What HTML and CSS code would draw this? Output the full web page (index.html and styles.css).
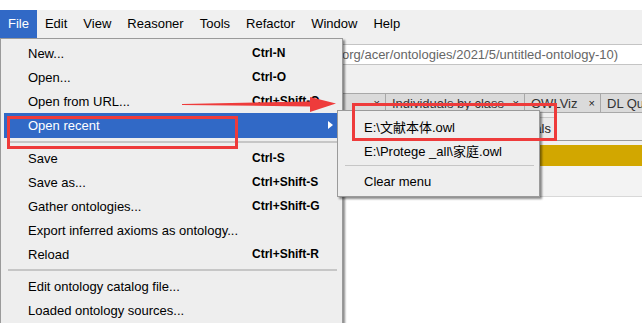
FILE: index.html
```html
<!DOCTYPE html>
<html lang="en">
<head>
  <meta charset="UTF-8">
  <title>Protege - File menu</title>
  <link rel="stylesheet" href="styles.css">
</head>
<body>
  <div class="title-strip">
    <span>untitled-ontology-10 (http://www.semanticweb.org/acer/ontologies/2021/5/untitled-ontology-10) : [C:\Users\acer\ontology.owl]</span>
  </div>

  <nav class="menubar">
    <div class="menubar-item active">File</div>
    <div class="menubar-item">Edit</div>
    <div class="menubar-item">View</div>
    <div class="menubar-item">Reasoner</div>
    <div class="menubar-item">Tools</div>
    <div class="menubar-item">Refactor</div>
    <div class="menubar-item">Window</div>
    <div class="menubar-item">Help</div>
  </nav>

  <div class="workspace">
    <div class="toolbar">
      <div class="address">org/acer/ontologies/2021/5/untitled-ontology-10)</div>
    </div>
    <div class="tabs">
      <div class="tab tab-first"><span>Data properties</span><span class="close">×</span></div>
      <div class="tab tab-ind"><span>Individuals by class</span><span class="close">×</span></div>
      <div class="tab tab-viz"><span>OWLViz</span><span class="close">×</span></div>
      <div class="tab tab-dl"><span>DL Query</span><span class="close">×</span></div>
    </div>
    <div class="subtabs">
      <div class="subtab">Individuals</div>
    </div>
    <div class="view-head">
      <div class="view-bar"></div>
    </div>
    <div class="view-gap"></div>
    <div class="view-body"></div>
  </div>

  <!-- File menu -->
  <div class="menu file-menu">
    <div class="item"><span>New...</span><span class="key">Ctrl-N</span></div>
    <div class="item"><span>Open...</span><span class="key">Ctrl-O</span></div>
    <div class="item"><span>Open from URL...</span><span class="key">Ctrl+Shift-O</span></div>
    <div class="item selected"><span>Open recent</span><span class="arrow"></span></div>
    <div class="sep"></div>
    <div class="item"><span>Save</span><span class="key">Ctrl-S</span></div>
    <div class="item"><span>Save as...</span><span class="key">Ctrl+Shift-S</span></div>
    <div class="item"><span>Gather ontologies...</span><span class="key">Ctrl+Shift-G</span></div>
    <div class="item"><span>Export inferred axioms as ontology...</span></div>
    <div class="item"><span>Reload</span><span class="key">Ctrl+Shift-R</span></div>
    <div class="sep"></div>
    <div class="item"><span>Edit ontology catalog file...</span></div>
    <div class="item"><span>Loaded ontology sources...</span></div>
  </div>

  <!-- Open recent submenu -->
  <div class="menu submenu">
    <div class="item"><span>E:\文献本体.owl</span></div>
    <div class="item"><span>E:\Protege _all\家庭.owl</span></div>
    <div class="sep"></div>
    <div class="item"><span>Clear menu</span></div>
  </div>

  <!-- annotations -->
  <div class="mark mark-recent"></div>
  <div class="mark mark-file"></div>
  <svg class="pointer" width="160" height="20" viewBox="0 0 160 20">
    <polygon points="0,8 128,5.5 128,1 154,7.5 128,16 128,10.5 0,9" fill="#ee3b3b"/>
  </svg>
</body>
</html>
```

FILE: styles.css
```css
* {
  box-sizing: border-box;
}

body {
  margin: 0;
  width: 642px;
  height: 323px;
  overflow: hidden;
  position: relative;
  background: #fff;
  font-family: "Liberation Sans", Arial, "Noto Sans CJK SC", sans-serif;
  font-size: 13px;
  color: #000;
}

.title-strip {
  height: 10px;
  overflow: hidden;
  background: #fff;
}

.title-strip span {
  display: block;
  margin-top: -15px;
  padding-left: 20px;
  line-height: 16px;
  font-size: 13px;
  white-space: nowrap;
}

.menubar {
  display: flex;
  height: 28px;
  background: #f0f0f0;
}

.menubar-item {
  padding: 0 8px;
  line-height: 28px;
}

.menubar-item.active {
  background: #3169c6;
  color: #fff;
}

/* background window */
.workspace {
  background: #f0f0f0;
}

.toolbar {
  height: 55px;
  padding-top: 6px;
}

.address {
  height: 21px;
  margin-left: 338px;
  margin-right: -20px;
  padding-left: 3px;
  background: #fff;
  border: 1px solid #c4c4c4;
  color: #666;
  line-height: 19px;
  white-space: nowrap;
  overflow: hidden;
}

.tabs {
  display: flex;
  height: 20px;
  padding-left: 235px;
}

.tab {
  flex: none;
  display: flex;
  justify-content: space-between;
  align-items: center;
  padding: 0 5px 0 6px;
  background: #dadada;
  border: 1px solid #a8a8a8;
  border-right: none;
  color: #333;
  font-size: 13px;
  white-space: nowrap;
  overflow: hidden;
}

.tab .close {
  flex: none;
  margin-left: 4px;
  font-size: 11px;
  color: #222;
}

.tab-first { width: 150px; }
.tab-ind { width: 139px; }
.tab-viz { width: 76px; }
.tab-dl { width: 90px; }

.subtabs {
  display: flex;
  align-items: flex-end;
  height: 28px;
  border-bottom: 1px solid #999;
}

.subtab {
  margin-left: 470px;
  width: 85px;
  height: 23px;
  line-height: 22px;
  text-align: right;
  padding-right: 3px;
  background: #eaeaea;
  border-right: 1px solid #9a9a9a;
  border-top: 1px solid #c8c8c8;
  color: #222;
}

.view-head {
  padding-top: 4px;
  background: #f0f0f0;
}

.view-bar {
  height: 21px;
  background: #d2a700;
}

.view-gap {
  height: 31px;
  background: #f3f3f3;
  border-bottom: 1px solid #d8d8d8;
}

.view-body {
  height: 130px;
  background: #fff;
}

/* menus */
.menu {
  position: absolute;
  background: #eeeeee;
  border: 1px solid #9a9a9a;
  box-shadow: 2px 2px 2px rgba(0, 0, 0, 0.45);
  padding: 2px 3px;
}

.file-menu {
  left: 0;
  top: 38px;
  width: 343px;
  height: 300px;
}

.item {
  display: flex;
  align-items: center;
  height: 24px;
  padding-left: 24px;
  white-space: nowrap;
}

.file-menu .item {
  position: relative;
}

.item .key {
  position: absolute;
  left: 248px;
  font-weight: bold;
  font-size: 12px;
}

.item.selected {
  background: #3169c6;
  color: #fff;
  height: 25px;
}

.item .arrow {
  position: absolute;
  right: 6px;
  top: 8px;
  width: 0;
  height: 0;
  border-left: 5px solid #fff;
  border-top: 4px solid transparent;
  border-bottom: 4px solid transparent;
}

.sep {
  height: 7px;
  margin: 0 2px 0 4px;
  border-top: 3px solid transparent;
  border-bottom: 3px solid transparent;
  background: #c6c6c6;
  background-clip: content-box;
}

.file-menu .sep {
  height: 8px;
}

.submenu {
  left: 337px;
  top: 110px;
  width: 203px;
  height: 87px;
  padding: 3px 3px;
}

.submenu .item {
  padding-left: 23px;
}

/* red annotations */
.mark {
  position: absolute;
  border: 3px solid #ee3b3b;
}

.mark-recent {
  left: 7px;
  top: 116px;
  width: 231px;
  height: 33px;
}

.mark-file {
  left: 352px;
  top: 103px;
  width: 205px;
  height: 38px;
}

.pointer {
  position: absolute;
  left: 182px;
  top: 96px;
}
```
